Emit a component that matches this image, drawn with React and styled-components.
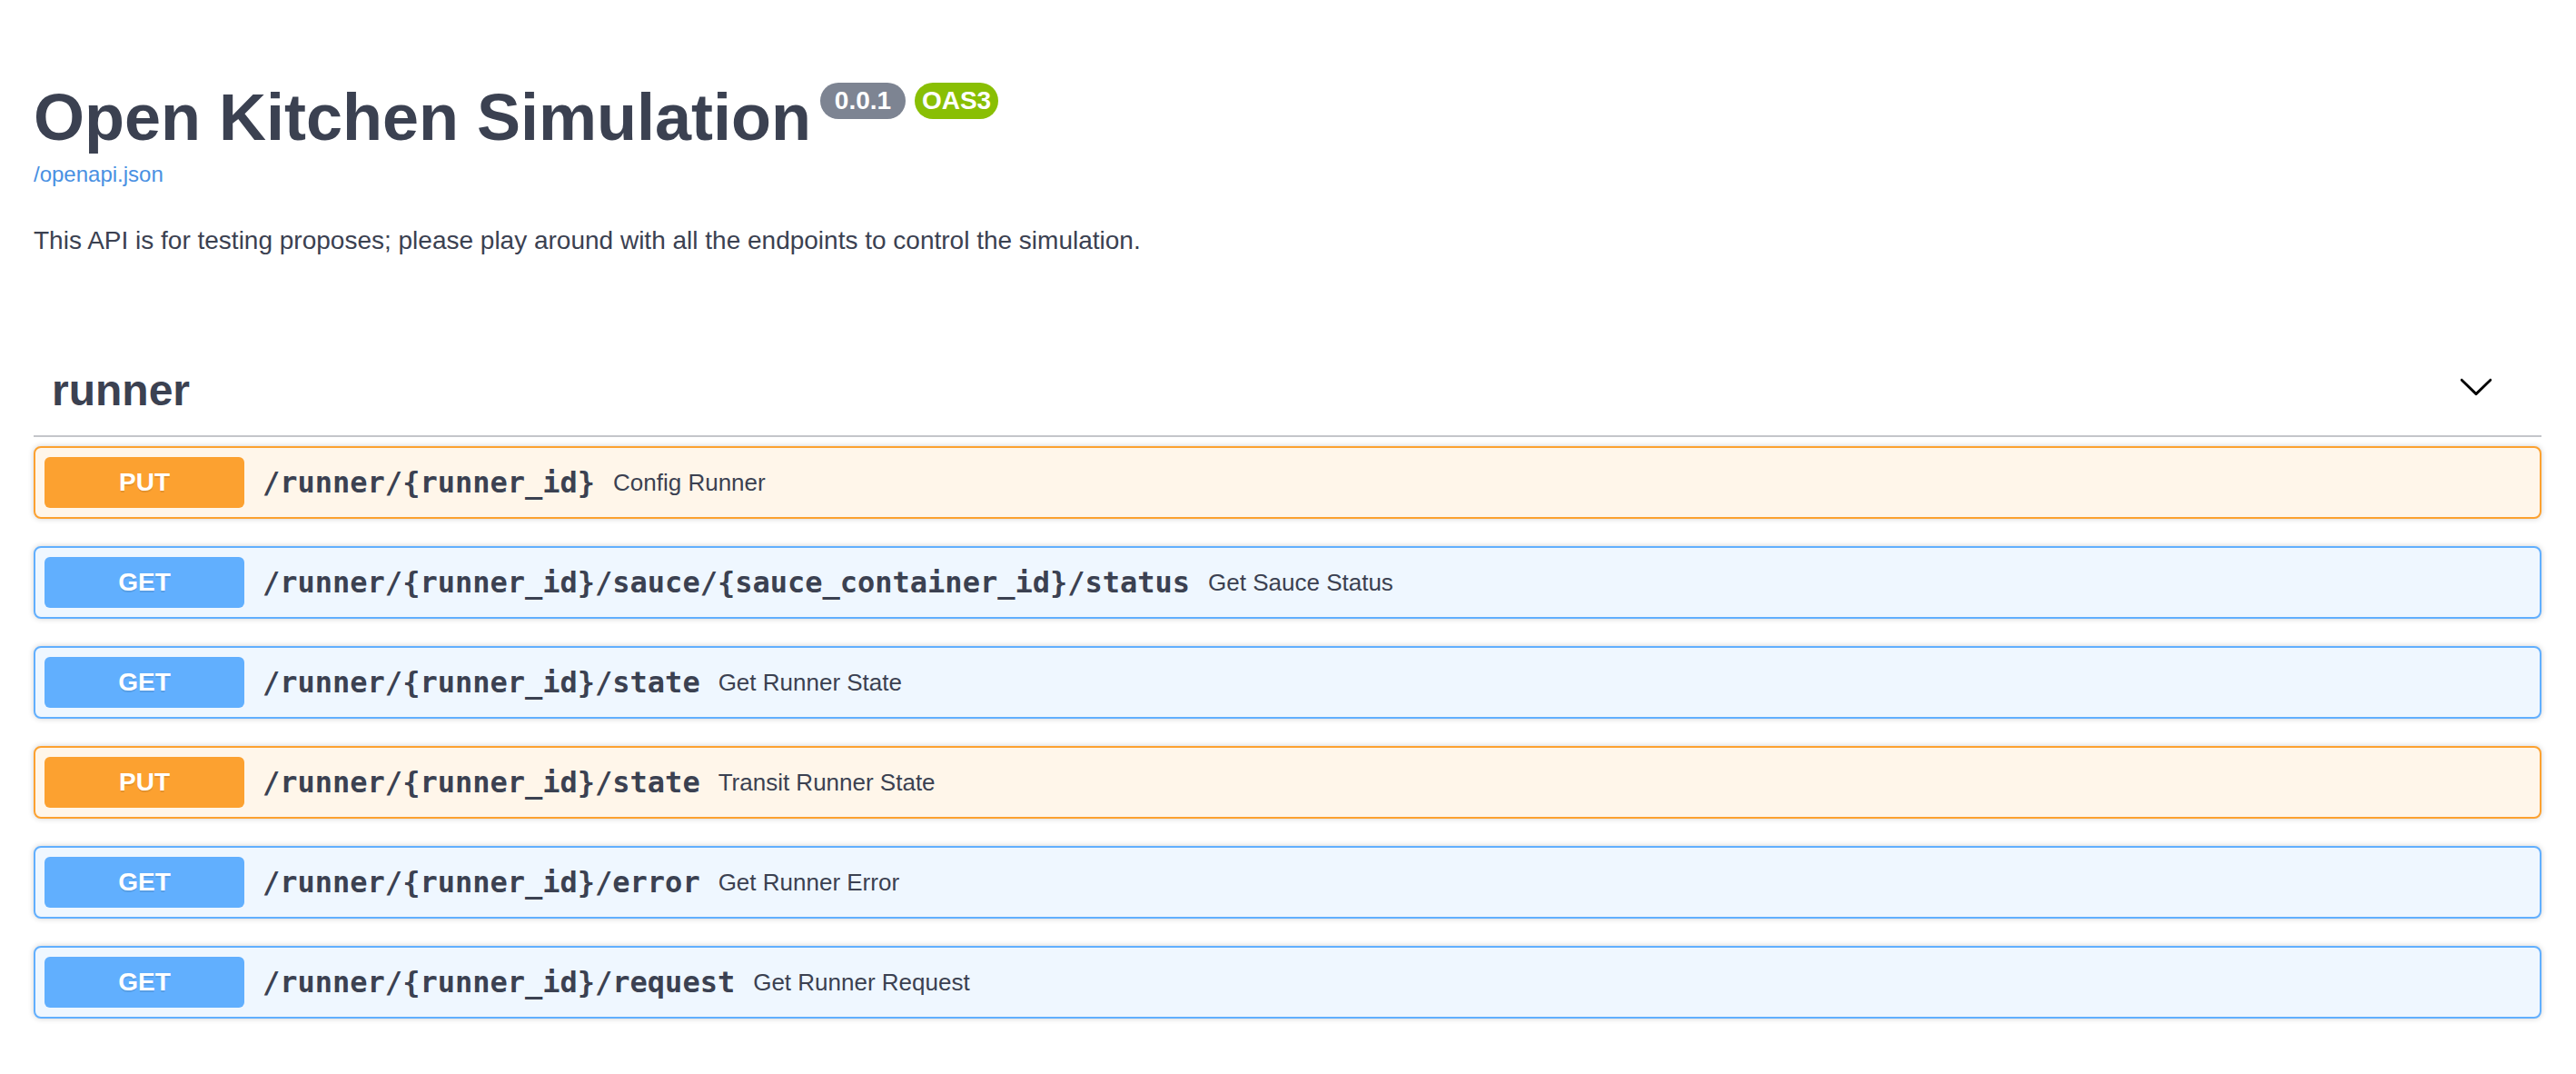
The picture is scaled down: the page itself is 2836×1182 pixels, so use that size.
import React from "react";
import styled, { createGlobalStyle } from "styled-components";

const GlobalStyle = createGlobalStyle`
  html, body {
    margin: 0;
    padding: 0;
    background: #fff;
    font-family: "Liberation Sans", Arial, sans-serif;
  }
`;

const METHOD_COLORS = {
  put: { main: "#fca130", soft: "#fff6ea" },
  get: { main: "#61affe", soft: "#eff7ff" },
};

const Wrapper = styled.div`
  box-sizing: border-box;
  width: 100%;
  padding: 0 38px 0 37px;
`;

const Info = styled.div`
  padding-top: 88px;
  margin-bottom: 99px;
`;

const TitleRow = styled.div`
  display: flex;
  align-items: flex-start;
`;

const Title = styled.h2`
  margin: 0;
  color: #3b4151;
  font-size: 72px;
  line-height: 83px;
  font-weight: 700;
`;

const Badge = styled.small`
  display: inline-flex;
  align-items: center;
  box-sizing: border-box;
  height: 40px;
  margin: 3px 0 0 10px;
  padding: 0 8px;
  border-radius: 40px;
  background: ${(p) => (p.$stamp ? "#89bf04" : "#7d8492")};
  color: #fff;
  font-size: 28px;
  line-height: 32px;
  font-weight: 700;
  white-space: pre;
`;

const SpecLink = styled.a`
  display: block;
  margin-top: 7px;
  color: #4990e2;
  font-size: 24px;
  line-height: 28px;
  text-decoration: none;
`;

const Description = styled.p`
  margin: 43px 0 0;
  color: #3b4151;
  font-size: 28px;
  line-height: 32px;
`;

const TagHeader = styled.div`
  display: flex;
  align-items: center;
  min-height: 59px;
  padding: 20px 40px 20px 20px;
  border-bottom: 2px solid rgba(59, 65, 81, 0.3);
  margin-bottom: 10px;
`;

const TagName = styled.h3`
  flex: 1;
  margin: 0;
  color: #3b4151;
  font-size: 48px;
  line-height: 55px;
  font-weight: 700;
`;

const ExpandButton = styled.button`
  display: flex;
  border: none;
  background: none;
  padding: 0 12px 9px 0;
  cursor: pointer;

  svg {
    width: 40px;
    height: 40px;
  }
`;

const Opblock = styled.div`
  display: flex;
  align-items: center;
  padding: 10px;
  margin-bottom: 30px;
  border: 2px solid ${(p) => METHOD_COLORS[p.$method].main};
  border-radius: 8px;
  background: ${(p) => METHOD_COLORS[p.$method].soft};
  box-shadow: 0 0 6px rgba(0, 0, 0, 0.19);
`;

const Method = styled.span`
  flex: 0 0 220px;
  padding: 12px 0;
  border-radius: 6px;
  background: ${(p) => METHOD_COLORS[p.$method].main};
  color: #fff;
  font-size: 28px;
  line-height: 32px;
  font-weight: 700;
  text-align: center;
  text-shadow: 0 2px 0 rgba(0, 0, 0, 0.1);
`;

const Path = styled.span`
  padding: 0 20px;
  color: #3b4151;
  font-family: "DejaVu Sans Mono", monospace;
  font-size: 32px;
  font-weight: 700;
`;

const Summary = styled.span`
  flex: 1;
  color: #3b4151;
  font-size: 26px;
`;

const ops = [
  { method: "put", path: "/runner/{runner_id}", summary: "Config Runner" },
  { method: "get", path: "/runner/{runner_id}/sauce/{sauce_container_id}/status", summary: "Get Sauce Status" },
  { method: "get", path: "/runner/{runner_id}/state", summary: "Get Runner State" },
  { method: "put", path: "/runner/{runner_id}/state", summary: "Transit Runner State" },
  { method: "get", path: "/runner/{runner_id}/error", summary: "Get Runner Error" },
  { method: "get", path: "/runner/{runner_id}/request", summary: "Get Runner Request" },
];

const Chevron = () => (
  <svg viewBox="0 0 20 20" aria-hidden="true">
    <path
      fill="#000"
      d="M17.418 6.109c.272-.268.709-.268.979 0s.271.701 0 .969l-7.908 7.83c-.27.268-.707.268-.979 0l-7.908-7.83c-.27-.268-.27-.701 0-.969.271-.268.709-.268.979 0L10 13.25l7.418-7.141z"
    />
  </svg>
);

export default function App() {
  return (
    <>
      <GlobalStyle />
      <Wrapper>
        <Info>
          <TitleRow>
            <Title>Open Kitchen Simulation</Title>
            <Badge>{" 0.0.1 "}</Badge>
            <Badge $stamp>OAS3</Badge>
          </TitleRow>
          <SpecLink href="#">/openapi.json</SpecLink>
          <Description>
            This API is for testing proposes; please play around with all the endpoints to control the simulation.
          </Description>
        </Info>

        <TagHeader>
          <TagName>runner</TagName>
          <ExpandButton aria-label="collapse">
            <Chevron />
          </ExpandButton>
        </TagHeader>

        {ops.map((op, i) => (
          <Opblock key={i} $method={op.method}>
            <Method $method={op.method}>{op.method.toUpperCase()}</Method>
            <Path>{op.path}</Path>
            <Summary>{op.summary}</Summary>
          </Opblock>
        ))}
      </Wrapper>
    </>
  );
}
